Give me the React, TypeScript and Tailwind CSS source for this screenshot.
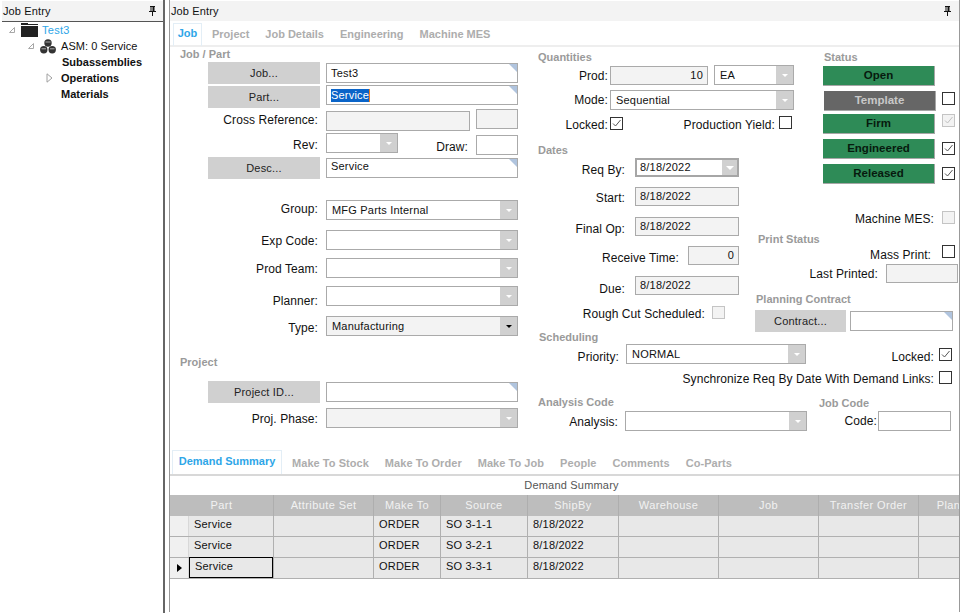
import type { ReactNode } from 'react'

const ink = 'text-[#111]'

function Pin() {
  return (
    <svg width="9" height="10" viewBox="0 0 9 10" className="shrink-0">
      <path d="M2 0h5v1H6.500v4H8v1H1V5h1.500V1H2z M3.500 1v4h1V1z" fill="#111" fillRule="evenodd" />
      <rect x="4" y="6" width="1" height="4" fill="#111" />
    </svg>
  )
}

function Expanded() {
  return (
    <svg width="8" height="8" viewBox="0 0 8 8" className="shrink-0">
      <path d="M6.500 1.500v5h-5z" fill="none" stroke="#a8a8a8" />
    </svg>
  )
}

function Collapsed() {
  return (
    <svg width="7" height="10" viewBox="0 0 7 10" className="shrink-0">
      <path d="M1 .8l5 4.200-5 4.200z" fill="none" stroke="#a0a0a0" />
    </svg>
  )
}

function Folder() {
  return (
    <svg width="17" height="14" viewBox="0 0 17 14" className="shrink-0">
      <path d="M0 0h7v2H0z M0 3h17v11H0z" fill="#222" />
      <rect x="7" y="1" width="10" height="1" fill="#222" />
    </svg>
  )
}

function Assembly() {
  return (
    <svg width="16" height="15" viewBox="0 0 16 15" className="shrink-0">
      <circle cx="8" cy="4" r="3.700" fill="#333" />
      <circle cx="3.800" cy="10.800" r="3.700" fill="#333" />
      <circle cx="12.200" cy="10.800" r="3.700" fill="#333" />
      <path d="M5.500 3h5M1.500 9.800h4.500M10 9.800h4.500" stroke="#aaa" strokeWidth="1" />
    </svg>
  )
}

function Title({ className, children }: { className: string; children: ReactNode }) {
  return <div className={`h-[14px] text-[11px] leading-[14px] font-bold text-[#9a9a9a] whitespace-nowrap ${className}`}>{children}</div>
}

function Lbl({ className, children }: { className: string; children: ReactNode }) {
  return <span className={`shrink-0 h-[14px] text-[12px] tracking-[0.08px] text-right whitespace-nowrap ${ink} ${className}`}>{children}</span>
}

function Btn({ className, children }: { className: string; children: ReactNode }) {
  return <div className={`shrink-0 h-[22px] bg-[#d0d0d0] flex items-center justify-center text-[11px] tracking-[0.2px] text-[#222] ${className}`}>{children}</div>
}

function Input({ className, corner, children, right }: { className: string; corner?: boolean; right?: boolean; children?: ReactNode }) {
  return (
    <div className={`relative shrink-0 border border-[#aaaaaa] px-[4px] flex items-center text-[11px] tracking-[0.2px] text-[#111] ${right ? 'justify-end' : ''} ${className}`}>
      {children}
      {corner && <span className="absolute top-0 right-0 w-0 h-0 border-t-[8px] border-l-[8px] border-t-[#b0c4de] border-l-transparent" />}
    </div>
  )
}

function Select({ className, text, active }: { className: string; text?: string; active?: boolean }) {
  return (
    <div className={`shrink-0 h-[20px] border border-[#aaaaaa] flex text-[11px] tracking-[0.2px] text-[#111] ${className}`}>
      <span className="flex-1 px-[5px] leading-[18px] whitespace-nowrap overflow-hidden">{text}</span>
      <span className="w-[17px] bg-[#d0d0d0] flex items-center justify-center">
        <span className={`w-0 h-0 border-x-[3px] border-x-transparent border-t-[3px] ${active ? 'border-t-black' : 'border-t-white'}`} />
      </span>
    </div>
  )
}

function Check({ className = '', checked, off }: { className?: string; checked?: boolean; off?: boolean }) {
  return (
    <span className={`shrink-0 block w-[13px] h-[13px] border ${off ? 'border-[#c4c4c4] bg-[#f3f3f3]' : 'border-[#333]'} ${className}`}>
      {checked && (
        <svg width="11" height="11" viewBox="0 0 11 11" className="block">
          <path d="M2 5.500l2.500 2.500 5-6" fill="none" stroke={off ? '#c0c0c0' : '#555'} strokeWidth="1" />
        </svg>
      )}
    </span>
  )
}

function StatusBtn({ className = '', label }: { className?: string; label: string }) {
  return (
    <div className={`shrink-0 w-[112px] h-[20px] bg-[#2e8b57] border-r border-b border-[#a6a6a6] flex items-center justify-center text-[11.5px] font-bold text-[#071a0e] ${className}`}>
      {label}
    </div>
  )
}

function Row({ className, labelClass, label, text, active, disabled }: { className: string; labelClass: string; label: string; text?: string; active?: boolean; disabled?: boolean }) {
  return (
    <div className={`flex ${className}`}>
      <Lbl className={`w-[148px] leading-[14px] ${labelClass}`}>{label}</Lbl>
      <Select className={`ml-[8px] w-[192px] ${active || disabled ? 'bg-[#f3f3f3]' : ''}`} text={text} active={active} />
    </div>
  )
}

function JobPart() {
  return (
    <div className="w-[360px] shrink-0">
      <Title className="ml-[10px]">Job / Part</Title>
      <div className="flex pl-[38px] mt-[1px]">
        <Btn className="w-[112px]">Job...</Btn>
        <Input className="ml-[6px] mt-[1px] w-[192px] h-[20px]" corner>Test3</Input>
      </div>
      <div className="flex pl-[38px] mt-[1px]">
        <Btn className="w-[112px] mt-[1px]">Part...</Btn>
        <Input className="ml-[6px] w-[192px] h-[20px]" corner>
          <span className="bg-[#0a64c8] text-white border-r border-[#f08020] leading-[13px]">Service</span>
        </Input>
      </div>
      <div className="flex mt-[1px]">
        <Lbl className="w-[148px] mt-[3px] leading-[16px]">Cross Reference:</Lbl>
        <Input className="ml-[8px] mt-[2px] w-[144px] h-[20px] bg-[#f3f3f3]" />
        <Input className="ml-[6px] w-[42px] h-[20px] bg-[#f3f3f3]" />
      </div>
      <div className="flex mt-[2px]">
        <Lbl className="w-[148px] mt-[5px] leading-[14px]">Rev:</Lbl>
        <Select className="ml-[8px] w-[72px]" />
        <Lbl className="w-[70px] mt-[7px] leading-[14px]">Draw:</Lbl>
        <Input className="ml-[8px] mt-[2px] w-[42px] h-[20px]" />
      </div>
      <div className="flex pl-[38px] mt-[2px]">
        <Btn className="w-[112px]">Desc...</Btn>
        <Input className="ml-[6px] mt-[1px] w-[192px] h-[20px] items-start pt-[1px] leading-[13px]" corner>Service</Input>
      </div>
      <Row className="mt-[21px]" labelClass="mt-[2px]" label="Group:" text="MFG Parts Internal" />
      <Row className="mt-[10px]" labelClass="mt-[4px]" label="Exp Code:" />
      <Row className="mt-[8px]" labelClass="mt-[4px]" label="Prod Team:" />
      <Row className="mt-[8px]" labelClass="mt-[8px]" label="Planner:" />
      <Row className="mt-[8px]" labelClass="mt-[5px]" label="Type:" text="Manufacturing" active />
      <Title className="ml-[10px] mt-[19px]">Project</Title>
      <div className="flex pl-[38px] mt-[12px]">
        <Btn className="w-[112px]">Project ID...</Btn>
        <Input className="ml-[6px] mt-[1px] w-[192px] h-[20px]" corner />
      </div>
      <Row className="mt-[5px]" labelClass="mt-[4px]" label="Proj. Phase:" disabled />
    </div>
  )
}

function DateField({ labelClass, label, mt }: { labelClass: string; label: string; mt: string }) {
  return (
    <div className={`flex ${mt}`}>
      <Lbl className={`w-[95px] ${labelClass}`}>{label}</Lbl>
      <Input className="ml-[10px] w-[104px] h-[19px] bg-[#f3f3f3]">8/18/2022</Input>
    </div>
  )
}

function RightForm() {
  return (
    <div className="w-[430px] shrink-0">
      <div className="grid grid-cols-[220px_70px_140px] grid-rows-[93px_60px_144px]">
        {/* Quantities */}
        <div className="col-span-2">
          <Title className="ml-[8px] mt-[3px]">Quantities</Title>
          <div className="flex mt-[1px]">
            <Lbl className="w-[78px] mt-[4px] leading-[14px]">Prod:</Lbl>
            <Input className="ml-[2px] mt-[1px] w-[98px] h-[19px] bg-[#f3f3f3]" right>10</Input>
            <Select className="ml-[6px] w-[80px]" text="EA" />
          </div>
          <div className="flex mt-[5px]">
            <Lbl className="w-[78px] mt-[3px] leading-[14px]">Mode:</Lbl>
            <Select className="ml-[2px] w-[184px]" text="Sequential" />
          </div>
          <div className="flex mt-[6px]">
            <Lbl className="w-[78px] mt-[1px] leading-[16px]">Locked:</Lbl>
            <Check className="ml-[2px] mt-[1px]" checked />
            <Lbl className="w-[152px] mt-[1px] leading-[16px]">Production Yield:</Lbl>
            <Check className="ml-[4px]" />
          </div>
        </div>

        {/* Status */}
        <div className="row-span-2">
          <Title className="ml-[4px] mt-[3px]">Status</Title>
          <div className="flex mt-[2px] pl-[3px]">
            <StatusBtn label="Open" />
          </div>
          <div className="flex mt-[5px] pl-[4px]">
            <div className="shrink-0 w-[112px] h-[20px] bg-[#666666] border-r border-b border-[#a6a6a6] flex items-center justify-center text-[11.5px] font-bold text-[#c8c8c8]">Template</div>
            <Check className="ml-[6px] mt-[1px]" />
          </div>
          <div className="flex mt-[3px] pl-[3px]">
            <StatusBtn label="Firm" />
            <Check className="ml-[7px]" checked off />
          </div>
          <div className="flex mt-[5px] pl-[3px]">
            <StatusBtn label="Engineered" />
            <Check className="ml-[7px] mt-[3px]" checked />
          </div>
          <div className="flex mt-[5px] pl-[3px]">
            <StatusBtn label="Released" />
            <Check className="ml-[7px] mt-[3px]" checked />
          </div>
        </div>

        {/* Dates */}
        <div className="row-span-2">
          <Title className="ml-[8px] mt-[3px]">Dates</Title>
          <div className="flex mt-[1px]">
            <Lbl className="w-[95px] mt-[4px] leading-[16px]">Req By:</Lbl>
            <div className="ml-[10px] w-[104px] h-[19px] border-2 border-[#a6a6a6] flex text-[11px] tracking-[0.2px] text-[#111]">
              <span className="flex-1 px-[3px] leading-[15px]">8/18/2022</span>
              <span className="w-[15px] bg-[#d0d0d0] flex items-center justify-center">
                <span className="w-0 h-0 border-x-[4px] border-x-transparent border-t-[4px] border-t-white" />
              </span>
            </div>
          </div>
          <DateField mt="mt-[10px]" labelClass="mt-[3px] leading-[16px]" label="Start:" />
          <DateField mt="mt-[11px]" labelClass="mt-[5px] leading-[14px]" label="Final Op:" />
          <div className="flex mt-[10px]">
            <Lbl className="w-[149px] mt-[5px] leading-[14px]">Receive Time:</Lbl>
            <Input className="ml-[9px] w-[51px] h-[19px] bg-[#f3f3f3]" right>0</Input>
          </div>
          <DateField mt="mt-[11px]" labelClass="mt-[5px] leading-[16px]" label="Due:" />
          <div className="flex mt-[11px]">
            <Lbl className="w-[175px] leading-[16px]">Rough Cut Scheduled:</Lbl>
            <Check className="ml-[7px]" off />
          </div>
          <Title className="ml-[9px] mt-[10px]">Scheduling</Title>
        </div>

        {/* Print status and planning contract */}
        <div className="col-span-2">
          <div className="flex mt-[11px]">
            <Lbl className="w-[184px] leading-[16px]">Machine MES:</Lbl>
            <Check className="ml-[8px]" off />
          </div>
          <Title className="ml-[8px] mt-[7px] !h-[13px]">Print Status</Title>
          <div className="flex">
            <Lbl className="w-[181px] mt-[2px] leading-[16px]">Mass Print:</Lbl>
            <Check className="ml-[11px]" />
          </div>
          <div className="flex mt-[3px]">
            <Lbl className="w-[128px] mt-[2px] leading-[16px]">Last Printed:</Lbl>
            <Input className="ml-[8px] w-[72px] h-[19px] bg-[#f3f3f3]" />
          </div>
          <Title className="ml-[6px] mt-[9px]">Planning Contract</Title>
          <div className="flex mt-[4px] pl-[5px]">
            <Btn className="w-[91px]">Contract...</Btn>
            <Input className="ml-[4px] mt-[1px] w-[103px] h-[20px]" corner />
          </div>
        </div>
      </div>

      <div className="flex">
        <Lbl className="w-[89px] mt-[5px] leading-[16px]">Priority:</Lbl>
        <Select className="ml-[7px] w-[180px]" text="NORMAL" />
        <Lbl className="w-[128px] mt-[5px] leading-[16px]">Locked:</Lbl>
        <Check className="ml-[5px] mt-[4px]" checked />
      </div>
      <div className="flex mt-[7px]">
        <Lbl className="w-[404px] mt-[1px] leading-[14px]">Synchronize Req By Date With Demand Links:</Lbl>
        <Check className="ml-[5px]" />
      </div>
      <div className="flex mt-[9px]">
        <Title className="ml-[8px] w-[281px]">Analysis Code</Title>
        <Title className="mt-[1px]">Job Code</Title>
      </div>
      <div className="flex mt-[1px]">
        <Lbl className="w-[88px] mt-[4px] leading-[14px]">Analysis:</Lbl>
        <Select className="ml-[7px] w-[182px]" />
        <Lbl className="w-[70px] mt-[3px] leading-[14px]">Code:</Lbl>
        <Input className="ml-[1px] w-[73px] h-[20px]" />
      </div>
    </div>
  )
}

const columns = [
  { name: 'Part', w: 'w-[84px]', head: 'w-[103px]' },
  { name: 'Attribute Set', w: 'w-[100px]', head: 'w-[100px]' },
  { name: 'Make To', w: 'w-[67px]', head: 'w-[67px]' },
  { name: 'Source', w: 'w-[87px]', head: 'w-[87px]' },
  { name: 'ShipBy', w: 'w-[91px]', head: 'w-[91px]' },
  { name: 'Warehouse', w: 'w-[100px]', head: 'w-[100px]' },
  { name: 'Job', w: 'w-[100px]', head: 'w-[100px]' },
  { name: 'Transfer Order', w: 'w-[100px]', head: 'w-[100px]' },
  { name: 'Plan', w: 'w-[60px]', head: 'w-[60px]' },
]

const rows = [
  ['Service', '', 'ORDER', 'SO 3-1-1', '8/18/2022', '', '', '', ''],
  ['Service', '', 'ORDER', 'SO 3-2-1', '8/18/2022', '', '', '', ''],
  ['Service', '', 'ORDER', 'SO 3-3-1', '8/18/2022', '', '', '', ''],
]

function DemandGrid() {
  return (
    <div className="overflow-hidden">
      <div className="flex h-[21px] bg-[#bdbdbd]">
        {columns.map((c, i) => (
          <div
            key={c.name}
            className={`${c.head} shrink-0 h-[21px] flex items-center justify-center text-[11px] tracking-[0.4px] text-[#f2f2f2] whitespace-nowrap ${i > 0 ? 'border-l border-[#aeaeae]' : ''}`}
          >
            {c.name}
          </div>
        ))}
      </div>
      {rows.map((r, ri) => (
        <div key={ri} className="flex h-[21px] border-b border-[#b0b0b0]">
          <div className="w-[19px] shrink-0 bg-[#f0f0f0] border-r border-[#d8d8d8] flex items-center justify-center">
            {ri === 2 && <span className="w-0 h-0 border-y-[4px] border-y-transparent border-l-[5px] border-l-black" />}
          </div>
          {r.map((v, i) => (
            <div
              key={i}
              className={`${columns[i].w} shrink-0 bg-[#e8e8e8] pl-[5px] text-[11px] leading-[16px] tracking-[0.2px] text-[#111] whitespace-nowrap ${i > 0 ? 'border-l border-[#b0b0b0]' : ''} ${ri === 2 && i === 0 ? 'border border-black -mt-px h-[21px]' : ''}`}
            >
              {v}
            </div>
          ))}
        </div>
      ))}
    </div>
  )
}

export default function App() {
  const topTabs = ['Project', 'Job Details', 'Engineering', 'Machine MES']
  const bottomTabs = ['Make To Stock', 'Make To Order', 'Make To Job', 'People', 'Comments', 'Co-Parts']

  return (
    <div className="flex w-[960px] h-[613px] overflow-hidden bg-white" style={{ fontFamily: '"Liberation Sans", Arial, sans-serif' }}>
      {/* Tree pane */}
      <div className="w-[163px] shrink-0 pl-[2px] pt-[1px]">
        <div className="h-[20px] bg-[#f3f3f3] border-b border-[#555] box-content flex items-center justify-between pl-[1px] pr-[6px] text-[11px] tracking-[0.12px] text-[#111]">
          Job Entry
          <Pin />
        </div>
        <div className="flex items-center h-[16px] pl-[6px]">
          <Expanded />
          <span className="ml-[5px]"><Folder /></span>
          <span className="ml-[4px] text-[11px] tracking-[0.3px] text-[#2ea6e8]">Test3</span>
        </div>
        <div className="flex items-center h-[16px] pl-[25px]">
          <Expanded />
          <span className="ml-[5px]"><Assembly /></span>
          <span className="ml-[5px] text-[11px] tracking-[0.05px] text-[#111] whitespace-nowrap">ASM: 0 Service</span>
        </div>
        <div className="h-[16px] pl-[60px] text-[11px] leading-[16px] font-bold text-[#111]">Subassemblies</div>
        <div className="flex items-center h-[16px] pl-[44px]">
          <Collapsed />
          <span className="ml-[8px] text-[11px] font-bold text-[#111]">Operations</span>
        </div>
        <div className="h-[16px] pl-[59px] text-[11px] leading-[16px] font-bold text-[#111]">Materials</div>
      </div>

      {/* Splitter */}
      <div className="w-[2px] shrink-0 bg-[#666]" />
      <div className="w-[4px] shrink-0" />

      {/* Job pane */}
      <div className="w-[791px] shrink-0 h-[612px] border-x border-[#999]">
        <div className="mt-[1px] h-[20px] bg-[#f3f3f3] flex items-center justify-between pl-[1px] pr-[7px] text-[11px] tracking-[0.12px] text-[#111]">
          Job Entry
          <Pin />
        </div>
        <div className="flex h-[24px] border-b-2 border-[#eeeeee] box-content">
          <div className="ml-[3px] mt-[2px] w-[29px] h-[23px] border border-b-0 border-[#e3eef6] flex items-center justify-center pb-[3px] text-[11px] font-bold text-[#2ea6e8]">Job</div>
          <div className="flex ml-[10px] mt-[2px] h-[23px] items-center gap-[16px] text-[11px] font-bold text-[#adadad]">
            {topTabs.map((t) => (
              <span key={t}>{t}</span>
            ))}
          </div>
        </div>

        <div className="flex h-[403px]">
          <JobPart />
          <RightForm />
        </div>

        <div className="flex h-[24px] border-b-2 border-[#d8d8d8] box-content">
          <div className="ml-[2px] w-[110px] h-[24px] border border-b-0 border-[#e3eef6] flex items-center justify-center pb-[2px] text-[11px] font-bold text-[#2ea6e8]">Demand Summary</div>
          <div className="flex ml-[10px] mt-[3px] h-[21px] items-center gap-[16px] text-[11px] font-bold tracking-[0.05px] text-[#adadad] whitespace-nowrap">
            {bottomTabs.map((t) => (
              <span key={t}>{t}</span>
            ))}
          </div>
        </div>
        <div className="h-[19px] flex items-center justify-center pl-[14px] text-[11px] tracking-[0.2px] text-[#555]">Demand Summary</div>
        <DemandGrid />
      </div>
    </div>
  )
}
